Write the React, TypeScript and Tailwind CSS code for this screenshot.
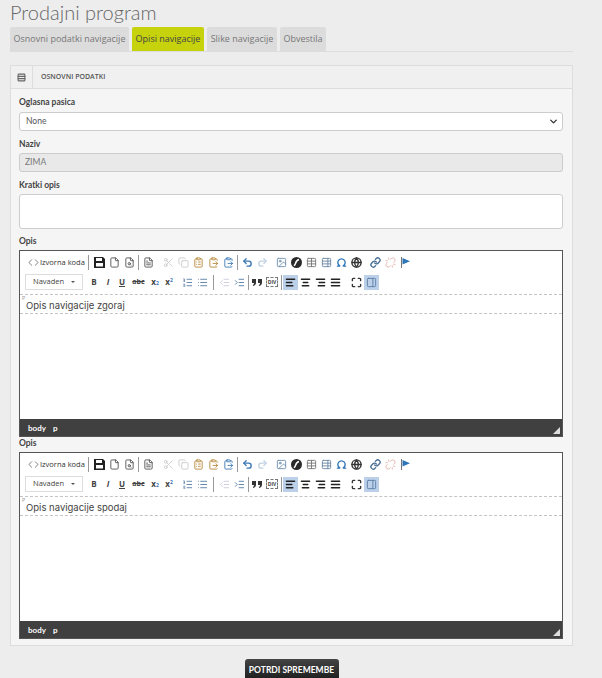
import React from "react";
import {
  AlignCenter,
  AlignJustify,
  AlignLeft,
  AlignRight,
  ChevronDown,
  ClipboardList,
  ClipboardPaste,
  Copy,
  File,
  FileSearch,
  FileText,
  Globe,
  Image,
  IndentDecrease,
  IndentIncrease,
  Link,
  List,
  ListOrdered,
  Maximize,
  Omega,
  PanelRight,
  Redo2,
  Scissors,
  Table,
  TableProperties,
  Undo2,
  Unlink,
  Code,
  Rows3,
} from "lucide-react";

const TABS = [
  { label: "Osnovni podatki navigacije", width: "w-[119px]" },
  { label: "Opisi navigacije", width: "w-[72px]", active: true },
  { label: "Slike navigacije", width: "w-[70px]" },
  { label: "Obvestila", width: "w-[46px]" },
];

const LABEL = "block font-['Lato',sans-serif] text-[8.5px] font-bold text-[#444]";

function Sep({ className }: { className: string }) {
  return <span className={`h-[15px] w-px bg-[#999] ${className}`} />;
}

function Btn({
  icon: Icon,
  color,
  active,
  heavy,
}: {
  icon: any;
  color: string;
  active?: boolean;
  heavy?: boolean;
}) {
  return (
    <span className={`flex h-[15px] w-[15px] items-center justify-center ${active ? "bg-[#bcd0ea]" : ""}`}>
      <Icon size={11} strokeWidth={heavy ? 3 : 2} className={color} />
    </span>
  );
}

// ckeditor glyphs that the icon package has no close match for
function SaveIcon() {
  return (
    <span className="flex h-[15px] w-[15px] items-center justify-center">
      <svg width="11" height="11" viewBox="0 0 11 11">
        <path d="M0 0h9l2 2v9H0z" fill="#222" />
        <rect x="2" y="1" width="6" height="3" fill="#fff" />
        <rect x="2" y="6" width="7" height="3.5" fill="#fff" />
      </svg>
    </span>
  );
}

function FlashIcon() {
  return (
    <span className="flex h-[15px] w-[15px] items-center justify-center">
      <svg width="11" height="11" viewBox="0 0 11 11">
        <circle cx="5.5" cy="5.5" r="5.5" fill="#2a2a2a" />
        <path d="M8 2.5C6 3 5 4.5 4.5 6.5 4.2 7.6 3.6 8.3 2.8 8.6" stroke="#fff" strokeWidth="1.4" fill="none" />
      </svg>
    </span>
  );
}

function AnchorIcon() {
  return (
    <span className="flex h-[15px] w-[15px] items-center justify-center">
      <svg width="11" height="11" viewBox="0 0 11 11">
        <rect x="1" y="0" width="1" height="11" fill="#777" />
        <path d="M2.5 1l7.5 3.2-7.5 3.3z" fill="#2e75b6" />
      </svg>
    </span>
  );
}

function QuoteIcon() {
  return (
    <span className="flex h-[15px] w-[14px] items-center justify-center">
      <svg width="10" height="7" viewBox="0 0 10 7" fill="#333">
        <path d="M0 0h4v3.5C4 5.5 3 6.5 1.2 7L.8 6C1.6 5.6 2 5 2 4H0z" />
        <path d="M6 0h4v3.5C10 5.5 9 6.5 7.2 7L6.8 6C7.6 5.6 8 5 8 4H6z" />
      </svg>
    </span>
  );
}

function Txt({ children, className }: { children: React.ReactNode; className: string }) {
  return (
    <span className={`flex h-[15px] items-center justify-center font-bold text-[#444] ${className}`}>
      {children}
    </span>
  );
}

function Editor({ text }: { text: string }) {
  return (
    <div className="flex h-[187px] w-full flex-col border border-[#555] bg-white">
      <div className="flex h-[43px] shrink-0 flex-col gap-[4px] bg-white pl-[5px] pt-[4px]">
        <div className="flex h-[15px] items-center">
          <span className="flex items-center pl-[3px]">
            <Code size={11} className="text-[#777]" />
            <span className="ml-[1px] text-[7.5px] text-[#333]">Izvorna koda</span>
          </span>
          <Sep className="mx-[3px]" />
          <SaveIcon />
          <Btn icon={File} color="text-[#555]" />
          <Btn icon={FileSearch} color="text-[#555]" />
          <Sep className="mx-[1.5px]" />
          <Btn icon={FileText} color="text-[#555]" />
          <span className="w-[5px]" />
          <Btn icon={Scissors} color="text-[#ccc]" />
          <Btn icon={Copy} color="text-[#ccc]" />
          <Btn icon={ClipboardList} color="text-[#b98a3c]" />
          <Btn icon={ClipboardPaste} color="text-[#b98a3c]" />
          <Btn icon={ClipboardPaste} color="text-[#3f7cb8]" />
          <Sep className="mx-[1.5px]" />
          <Btn icon={Undo2} color="text-[#3b78b5]" heavy />
          <Btn icon={Redo2} color="text-[#c3d3e3]" heavy />
          <span className="w-[4px]" />
          <Btn icon={Image} color="text-[#6f8faf]" />
          <FlashIcon />
          <Btn icon={Table} color="text-[#777]" />
          <Btn icon={TableProperties} color="text-[#6b87a3]" />
          <Btn icon={Omega} color="text-[#2e75b6]" heavy />
          <Btn icon={Globe} color="text-[#333]" heavy />
          <span className="w-[4px]" />
          <Btn icon={Link} color="text-[#4a6f94]" heavy />
          <Btn icon={Unlink} color="text-[#e3b4a8]" />
          <AnchorIcon />
        </div>
        <div className="flex h-[16px] items-center">
          <span className="flex h-[16px] w-[58px] items-center justify-between border border-[#ddd] px-[7px] text-[7.5px] text-[#444]">
            Navaden
            <span className="h-0 w-0 border-x-[2px] border-t-[2px] border-x-transparent border-t-[#555]" />
          </span>
          <span className="w-[4px]" />
          <Txt className="w-[14px] text-[8px]">B</Txt>
          <Txt className="w-[14px] text-[8px] italic">I</Txt>
          <Txt className="w-[14px] text-[8px] underline">U</Txt>
          <Txt className="w-[19px] text-[7px] line-through">abc</Txt>
          <Txt className="w-[14px] text-[8px]">
            x<sub className="text-[5px] text-[#3b78b5]">2</sub>
          </Txt>
          <Txt className="w-[14px] text-[8px]">
            x<sup className="text-[5px] text-[#3b78b5]">2</sup>
          </Txt>
          <span className="w-[4px]" />
          <Btn icon={ListOrdered} color="text-[#5a7fa5]" />
          <Btn icon={List} color="text-[#5a7fa5]" />
          <Sep className="mx-[3px]" />
          <Btn icon={IndentDecrease} color="text-[#ccd]" />
          <Btn icon={IndentIncrease} color="text-[#5a7fa5]" />
          <Sep className="mx-[1px]" />
          <QuoteIcon />
          <Txt className="w-[16px]">
            <span className="border border-dashed border-[#777] px-px text-[5px] leading-[8px]">DIV</span>
          </Txt>
          <Sep className="mx-[1px]" />
          <Btn icon={AlignLeft} color="text-[#222]" active heavy />
          <Btn icon={AlignCenter} color="text-[#222]" heavy />
          <Btn icon={AlignRight} color="text-[#222]" heavy />
          <Btn icon={AlignJustify} color="text-[#222]" heavy />
          <span className="w-[6px]" />
          <Btn icon={Maximize} color="text-[#333]" heavy />
          <Btn icon={PanelRight} color="text-[#5a7fa5]" active />
        </div>
      </div>
      <div className="flex-1">
        <div className="relative h-[20px] border-y border-dashed border-[#c4c4c4] pl-[6px] font-['Inter',sans-serif] text-[9.5px] leading-[22px] text-[#444]">
          <span className="absolute left-[2px] top-[-1px] text-[5px] leading-[8px] text-[#999]">P</span>
          {text}
        </div>
      </div>
      <div className="relative flex h-[17px] shrink-0 items-center gap-[7px] bg-[#404040] pl-[8px] font-['Lato',sans-serif] text-[8px] font-bold text-white">
        <span>body</span>
        <span>p</span>
        <span className="absolute bottom-[2px] right-[2px] h-0 w-0 border-b-[7px] border-l-[7px] border-b-[#ddd] border-l-transparent" />
      </div>
    </div>
  );
}

export default function App() {
  return (
    <div className="h-[678px] w-[602px] overflow-hidden bg-[#ededed] font-['Open_Sans',sans-serif] text-[#333]">
      <div className="pl-[10px] pr-[29px]">
        <h1 className="h-[27px] font-['Lato',sans-serif] text-[20px] font-light leading-[24px] text-[#666]">Prodajni program</h1>
        <div className="flex h-[25px] gap-[3px] border-b border-[#ddd]">
          {TABS.map((t) => (
            <div
              key={t.label}
              className={`flex h-[24px] items-center justify-center rounded-t-[2px] text-[9px] ${t.width} ${
                t.active ? "bg-[#c5d20c] text-[#444]" : "bg-[#dcdcdc] text-[#777]"
              }`}
            >
              {t.label}
            </div>
          ))}
        </div>
        <div className="mt-[13px] h-[581px] border border-[#ddd] bg-[#f5f5f5]">
          <div className="flex h-[23px] items-center border-b border-[#ddd] bg-[#f0f0f0]">
            <span className="flex h-full w-[22px] items-center justify-center border-r border-[#ddd]">
              <Rows3 size={9} strokeWidth={3} className="text-[#666]" />
            </span>
            <span className="pl-[8px] text-[7px] font-semibold text-[#555]">OSNOVNI PODATKI</span>
          </div>
          <div className="pl-[8px] pr-[9px] pt-[6px]">
            <label className={`${LABEL} h-[17px] leading-[15px]`}>Oglasna pasica</label>
            <div className="flex h-[19px] items-center justify-between rounded-[3px] border border-[#ccc] bg-white pl-[6px] pr-[3px] font-['Lato',sans-serif] text-[8.5px] text-[#555]">
              None
              <ChevronDown size={11} strokeWidth={3} className="text-[#333]" />
            </div>
            <label className={`${LABEL} mt-[7px] h-[15px] leading-[12px]`}>Naziv</label>
            <div className="flex h-[19px] items-center rounded-[3px] border border-[#ccc] bg-[#e9e9e9] pl-[5px] font-['Lato',sans-serif] text-[8.5px] text-[#777]">
              ZIMA
            </div>
            <label className={`${LABEL} mt-[8px] h-[14px] leading-[11px]`}>Kratki opis</label>
            <div className="h-[35px] rounded-[3px] border border-[#ccc] bg-white" />
            <label className={`${LABEL} mt-[7px] h-[14px] leading-[11px]`}>Opis</label>
            <Editor text="Opis navigacije zgoraj" />
            <label className={`${LABEL} h-[15px] leading-[12px]`}>Opis</label>
            <Editor text="Opis navigacije spodaj" />
          </div>
        </div>
        <div className="mt-[13px] flex justify-center">
          <button className="h-[22px] w-[94px] rounded-[3px] bg-linear-to-b from-[#444] to-[#1c1c1c] font-['Lato',sans-serif] text-[8.5px] font-bold text-white">
            POTRDI SPREMEMBE
          </button>
        </div>
      </div>
    </div>
  );
}
